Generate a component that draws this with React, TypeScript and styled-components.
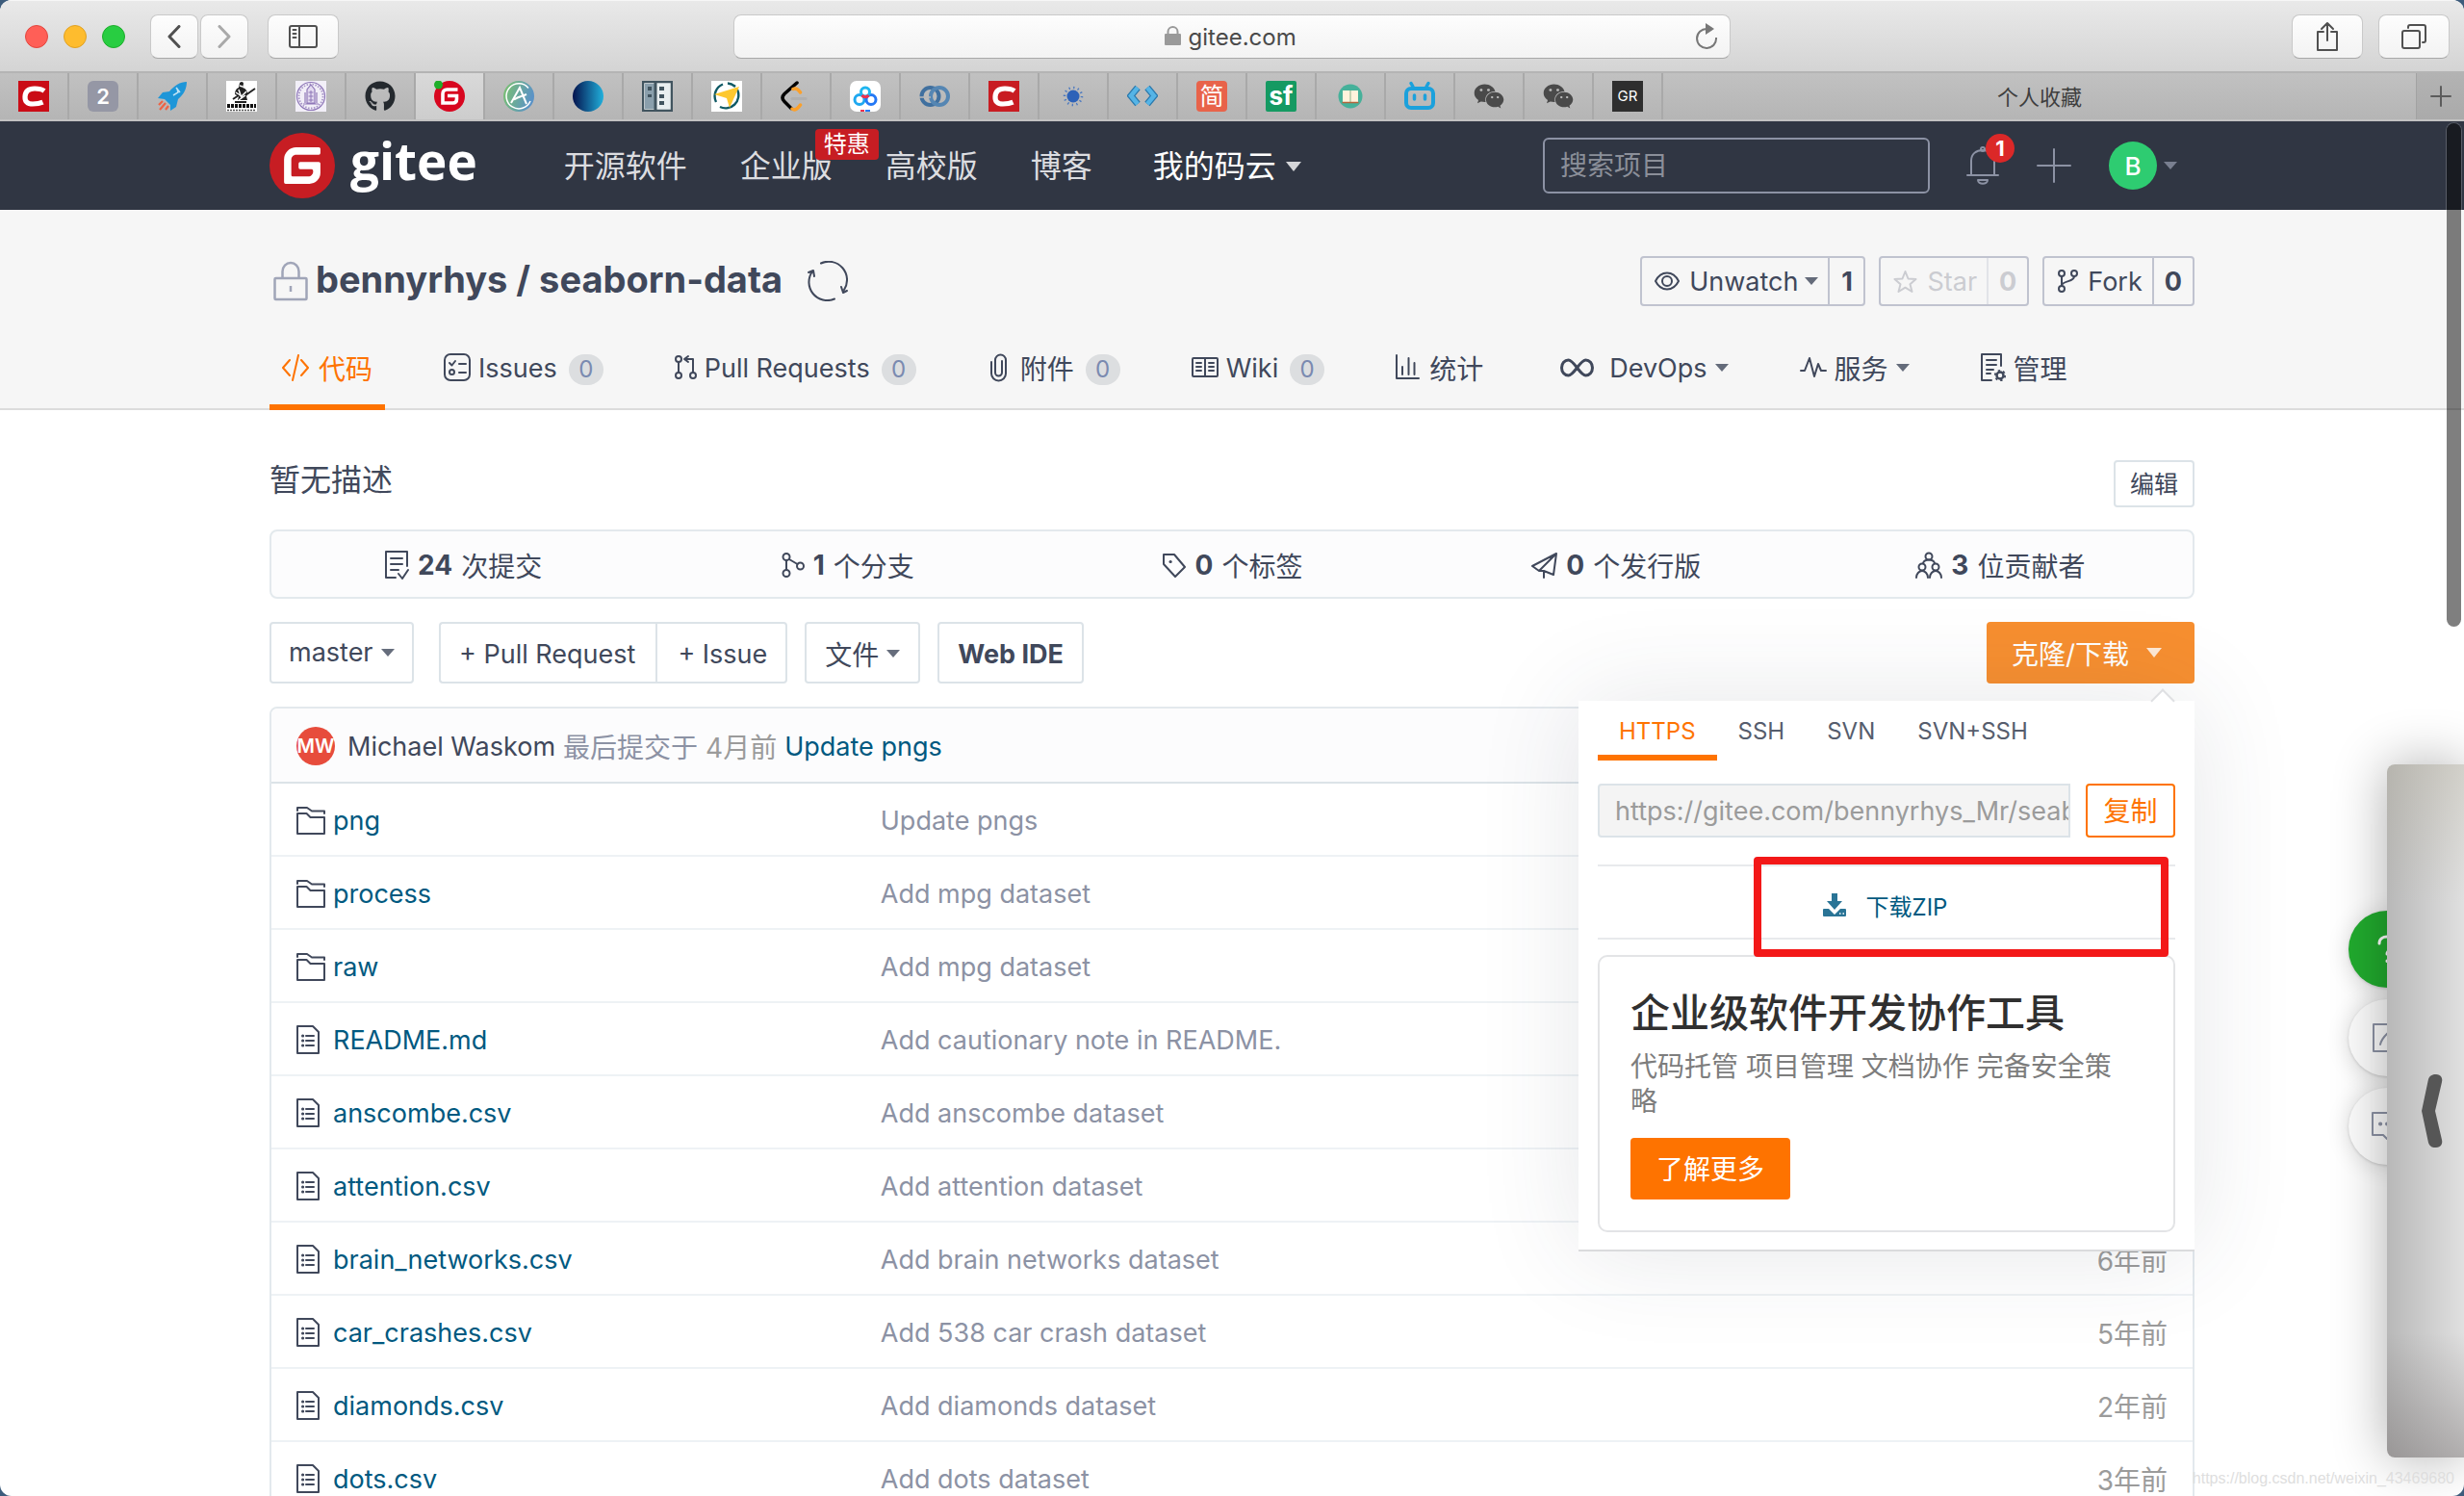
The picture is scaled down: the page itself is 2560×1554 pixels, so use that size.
import React from 'react';
import styled, { createGlobalStyle, css } from 'styled-components';
import { FaGithub, FaWeixin } from 'react-icons/fa';

const ink = '#40485b';
const muted = '#8c92a4';
const link = '#005980';
const orange = '#fe7300';
const line = '#dce3e8';
const sans = `Inter, "Noto Sans CJK SC", sans-serif`;

const Global = createGlobalStyle`
  *, *::before, *::after { box-sizing: border-box; }
  body { margin: 0; background: #3d5c7c; font-family: ${sans}; color: ${ink}; }
  button, input, select { font-family: inherit; color: inherit; margin: 0; }
  button { cursor: pointer; }
  a { color: inherit; text-decoration: none; }
  svg { display: block; flex: none; }
`;

/* ---------- window chrome ---------- */
const Window = styled.div`
  position: relative;
  display: flex;
  flex-direction: column;
  height: 100vh;
  overflow: hidden;
  border-radius: 12px;
  background: #fff;
`;
const TitleBar = styled.header`
  display: flex;
  align-items: center;
  height: 76px;
  padding: 0 15px;
  background: linear-gradient(#e9e9e9, #d4d4d4);
  border-top: 1px solid #f6f6f6;
  border-bottom: 2px solid #b4b4b4;
  flex: none;
`;
const BarSide = styled.div<{ $end?: boolean }>`
  flex: 1;
  display: flex;
  align-items: center;
  justify-content: ${p => (p.$end ? 'flex-end' : 'flex-start')};
  gap: ${p => (p.$end ? '16px' : '20px')};
`;
const Lights = styled.div`
  display: flex;
  gap: 16px;
  margin: 0 6px 0 11px;
`;
const Light = styled.button<{ $c: string; $b: string }>`
  width: 24px;
  height: 24px;
  padding: 0;
  border-radius: 50%;
  background: ${p => p.$c};
  border: 1px solid ${p => p.$b};
`;
const Pair = styled.div`
  display: flex;
  gap: 2px;
`;
const ChromeButton = styled.button<{ $w?: number; $dim?: boolean }>`
  display: flex;
  align-items: center;
  justify-content: center;
  width: ${p => p.$w ?? 74}px;
  height: 46px;
  padding: 0;
  color: ${p => (p.$dim ? '#a9a9a9' : '#505050')};
  background: linear-gradient(#fdfdfd, #f3f3f3);
  border: 1px solid #c9c9c9;
  border-bottom-color: #a8a8a8;
  border-radius: 8px;
`;
const Address = styled.div`
  flex: 0 1 1036px;
  display: flex;
  align-items: center;
  justify-content: center;
  height: 46px;
  padding: 0 12px;
  background: linear-gradient(#fdfdfd, #f3f3f3);
  border: 1px solid #c9c9c9;
  border-bottom-color: #a8a8a8;
  border-radius: 8px;
  color: #8e8e8e;
`;
const AddressSide = styled.span`
  flex: 1;
  display: flex;
  justify-content: flex-end;
`;
const AddressCore = styled.label`
  display: flex;
  align-items: center;
  gap: 8px;
`;
const AddressInput = styled.input`
  width: 116px;
  padding: 2px 0 0;
  border: 0;
  background: none;
  font-size: 24px;
  line-height: 32px;
  color: #4a4a4a;
  outline: none;
`;
const TabBar = styled.nav`
  display: flex;
  height: 50px;
  flex: none;
  background: linear-gradient(#c1c1c1, #b5b5b5);
  border-bottom: 2px solid #c2c2c2;
`;
const PinnedTab = styled.a<{ $on?: boolean }>`
  display: flex;
  align-items: center;
  justify-content: center;
  flex: 0 0 72px;
  border-right: 2px solid #a9a9a9;
  background: ${p => (p.$on ? 'linear-gradient(#d9d9d9, #cdcdcd)' : 'none')};
`;
const WideTab = styled.a`
  display: flex;
  align-items: center;
  justify-content: center;
  flex: 1;
  padding-bottom: 2px;
  font-size: 22px;
  color: #3e3e3e;
  border-right: 1px solid #a2a2a2;
`;
const NewTab = styled.button`
  display: flex;
  align-items: center;
  justify-content: center;
  width: 49px;
  padding: 0;
  border: 0;
  color: #5c5c5c;
  background: linear-gradient(#b3b3b3, #aaaaaa);
`;
const LetterIcon = styled.span<{ $bg: string; $r?: number; $s: number; $w?: number }>`
  display: flex;
  align-items: center;
  justify-content: center;
  width: 32px;
  height: 32px;
  border-radius: ${p => p.$r ?? 0}px;
  background: ${p => p.$bg};
  color: #fff;
  font-size: ${p => p.$s}px;
  font-weight: ${p => p.$w ?? 400};
  line-height: 32px;
`;

/* ---------- site header ---------- */
const SiteHeader = styled.header`
  height: 92px;
  flex: none;
  background: #303643;
`;
const Container = styled.div`
  width: 100%;
  max-width: 2000px;
  margin: 0 auto;
`;
const HeaderRow = styled(Container)`
  display: flex;
  align-items: center;
  height: 100%;
  padding-right: 18px;
`;
const Logo = styled.a`
  display: flex;
  align-items: center;
  gap: 16px;
  color: #fff;
`;
const LogoText = styled.span`
  font-family: "Open Sans", sans-serif;
  font-weight: 700;
  font-size: 53px;
  line-height: 68px;
  padding-bottom: 10px;
`;
const SiteNav = styled.nav`
  display: flex;
  gap: 55px;
  margin-left: 90px;
  padding-top: 2px;
`;
const SiteLink = styled.a<{ $on?: boolean }>`
  position: relative;
  display: flex;
  align-items: center;
  gap: 10px;
  font-size: 32px;
  line-height: 48px;
  color: ${p => (p.$on ? '#fff' : '#dcdde0')};
  ${p => p.$on && css`padding-left: 8px;`}
`;
const Promo = styled.span`
  position: absolute;
  left: 78px;
  top: -15px;
  padding: 0 9px;
  border-radius: 4px;
  background: #c71d23;
  color: #fff;
  font-size: 24px;
  line-height: 32px;
  white-space: nowrap;
`;
const Search = styled.input`
  width: 402px;
  height: 58px;
  margin-left: auto;
  padding: 0 16px;
  border: 2px solid ${muted};
  border-radius: 6px;
  background: transparent;
  color: #fff;
  font-size: 28px;
  &::placeholder { color: #8b8f99; opacity: 1; }
`;
const Tools = styled.div`
  display: flex;
  align-items: center;
  margin-left: 38px;
  gap: 39px;
  color: ${muted};
`;
const ToolButton = styled.button`
  position: relative;
  display: flex;
  align-items: center;
  gap: 7px;
  padding: 0;
  border: 0;
  background: none;
`;
const Notice = styled.span`
  position: absolute;
  left: 20px;
  top: -13px;
  width: 30px;
  height: 30px;
  border-radius: 50%;
  background: #db2828;
  color: #fff;
  font-size: 22px;
  font-weight: 700;
  line-height: 30px;
  text-align: center;
`;
const Avatar = styled.span<{ $size: number; $bg: string }>`
  display: flex;
  align-items: center;
  justify-content: center;
  flex: none;
  width: ${p => p.$size}px;
  height: ${p => p.$size}px;
  border-radius: 50%;
  background: ${p => p.$bg};
  color: #fff;
  font-size: ${p => (p.$size > 40 ? 26 : 20)}px;
  font-weight: ${p => (p.$size > 40 ? 500 : 600)};
`;
const Caret = styled.span<{ $big?: boolean }>`
  flex: none;
  width: 0;
  height: 0;
  border-style: solid;
  border-color: currentColor transparent transparent;
  border-width: ${p => (p.$big ? '10px 8px 0' : '8px 7px 0')};
  opacity: 0.8;
`;

/* ---------- repository header ---------- */
const RepoHead = styled.section`
  flex: none;
  padding-top: 48px;
  background: #f6f6f6;
  border-bottom: 2px solid #dcdcdc;
`;
const RepoTop = styled(Container)`
  display: flex;
  align-items: center;
  height: 52px;
  padding-left: 4px;
`;
const RepoName = styled.h1`
  margin: 0 26px 0 8px;
  padding-bottom: 4px;
  font-size: 38px;
  line-height: 48px;
  font-weight: 700;
`;
const Actions = styled.div`
  display: flex;
  gap: 14px;
  margin-left: auto;
`;
const Split = styled.div<{ $off?: boolean }>`
  display: flex;
  height: 52px;
  border: 2px solid #c0c3cf;
  border-radius: 4px;
  color: ${p => (p.$off ? '#cbccd1' : ink)};
`;
const SplitMain = styled.button`
  display: flex;
  align-items: center;
  padding: 0 10px 0 13px;
  border: 0;
  background: none;
  font-size: 27px;
  gap: 10px;
  ${Caret} { margin-left: -3px; }
`;
const SplitCount = styled.a<{ $off?: boolean }>`
  display: flex;
  align-items: center;
  justify-content: center;
  min-width: 37px;
  padding: 0 11px;
  border-left: 2px solid ${p => (p.$off ? '#e2e3e8' : '#c0c3cf')};
  font-size: 27px;
  font-weight: 700;
`;
const RepoTabs = styled.nav`
  display: flex;
  gap: 48px;
  margin: 26px 0 -2px;
`;
const RepoTab = styled.a<{ $on?: boolean; $gap?: number; $lead?: number }>`
  display: flex;
  align-items: center;
  gap: ${p => p.$gap ?? 8}px;
  height: 82px;
  padding: 0 13px 0 ${p => p.$lead ?? 13}px;
  border-bottom: 6px solid ${p => (p.$on ? orange : 'transparent')};
  color: ${p => (p.$on ? orange : ink)};
  white-space: nowrap;
`;
const Label = styled.span<{ $cjk?: boolean }>`
  font-size: ${p => (p.$cjk ? 28 : 27)}px;
`;
const TabLabel = styled(Label)`
  display: flex;
  align-items: center;
  gap: 8px;
`;
const Badge = styled.span`
  min-width: 36px;
  height: 32px;
  margin: 3px 0 0 4px;
  border-radius: 16px;
  background: #dcdee0;
  color: #7a8ab0;
  font-size: 24px;
  line-height: 32px;
  text-align: center;
`;

/* ---------- main column ---------- */
const Main = styled.main`
  flex: 1;
  min-height: 0;
  padding-top: 52px;
`;
const DescRow = styled.div`
  display: flex;
  align-items: center;
  justify-content: space-between;
`;
const Desc = styled.p`
  margin: 0;
  font-size: 32px;
  line-height: 40px;
  padding-bottom: 8px;
`;
const boxed = css`
  border: 2px solid ${line};
  border-radius: 4px;
  background: #fff;
`;
const EditButton = styled.button`
  ${boxed}
  width: 84px;
  height: 49px;
  padding: 0 0 3px;
  font-size: 25px;
`;
const Stats = styled.ul`
  display: grid;
  grid-template-columns: repeat(5, 1fr);
  height: 72px;
  margin: 23px 0 0;
  padding: 2px 0 0;
  list-style: none;
  border: 2px solid #e3e9ed;
  border-radius: 8px;
  background: #fcfcfd;
`;
const Stat = styled.li`
  display: flex;
  align-items: center;
  justify-content: center;
  gap: 9px;
  b { font-size: 28px; }
`;
const Toolbar = styled.div`
  display: flex;
  align-items: center;
  margin-top: 24px;
  gap: 18px;
`;
const BranchPick = styled.label`
  ${boxed}
  display: flex;
  align-items: center;
  width: 150px;
  height: 64px;
  margin-right: 8px;
  padding: 0 18px;
  gap: 8px;
`;
const BranchSelect = styled.select`
  flex: 1;
  min-width: 0;
  padding: 0;
  border: 0;
  appearance: none;
  background: none;
  font-size: 27px;
  line-height: 40px;
`;
const ToolBtn = styled.button<{ $cjk?: boolean; $strong?: boolean }>`
  ${boxed}
  display: flex;
  align-items: center;
  height: 64px;
  padding: 2px 19px 0;
  gap: 8px;
  font-size: ${p => (p.$cjk ? 28 : 27)}px;
  font-weight: ${p => (p.$strong ? 700 : 400)};
`;
const BtnGroup = styled.div`
  display: flex;
  ${ToolBtn}:first-child { border-radius: 4px 0 0 4px; border-right: 0; padding-right: 21px; }
  ${ToolBtn}:last-child { border-radius: 0 4px 4px 0; padding-left: 21px; }
`;
const CloneWrap = styled.div`
  position: relative;
  margin-left: auto;
`;
const CloneButton = styled.button`
  display: flex;
  align-items: center;
  justify-content: center;
  gap: 18px;
  width: 216px;
  height: 64px;
  padding: 0 8px 0 0;
  border: 0;
  border-radius: 4px;
  background: #f78f30;
  color: #fff;
  font-size: 28px;
`;

/* ---------- clone popup ---------- */
const Popup = styled.div`
  position: absolute;
  z-index: 3;
  top: 82px;
  right: 0;
  width: 640px;
  padding: 0 20px 18px;
  background: #fff;
  border-bottom: 2px solid #dadbdd;
  box-shadow: 0 0 100px rgba(50, 54, 70, 0.12);
  &::before {
    content: '';
    position: absolute;
    top: -9px;
    right: 24px;
    width: 18px;
    height: 18px;
    background: #fff;
    border: solid #dfe0e3;
    border-width: 2px 0 0 2px;
    transform: rotate(45deg);
  }
`;
const ProtoTabs = styled.div`
  position: relative;
  display: flex;
  height: 62px;
`;
const Proto = styled.button<{ $on?: boolean }>`
  padding: 6px 22px 0;
  border: 0;
  border-bottom: 6px solid ${p => (p.$on ? orange : 'transparent')};
  background: none;
  color: ${p => (p.$on ? orange : '#565d6d')};
  font-size: 24px;
`;
const UrlRow = styled.div`
  display: flex;
  gap: 16px;
  margin-top: 24px;
`;
const UrlInput = styled.input`
  flex: 1;
  min-width: 0;
  height: 56px;
  padding: 0 0 0 16px;
  border: 2px solid ${line};
  border-radius: 4px 0 0 4px;
  background: #f4f4f4;
  color: #9b9b9b;
  font-size: 27px;
`;
const CopyButton = styled.button`
  width: 93px;
  height: 56px;
  padding: 0 0 2px;
  border: 2px solid ${orange};
  border-radius: 4px;
  background: #fff;
  color: ${orange};
  font-size: 28px;
`;
const ZipRow = styled.div`
  position: relative;
  display: flex;
  align-items: center;
  justify-content: center;
  height: 78px;
  margin-top: 28px;
  padding-top: 6px;
  border: solid #e8eaec;
  border-width: 2px 0;
`;
const ZipLink = styled.a`
  display: flex;
  align-items: center;
  gap: 20px;
  padding-right: 4px;
  color: ${link};
  font-size: 24px;
`;
const Highlight = styled.div`
  position: absolute;
  z-index: 1;
  top: -10px;
  right: 7px;
  width: 431px;
  height: 104px;
  border: 8px solid #f31818;
  border-radius: 4px;
  pointer-events: none;
`;
const Ad = styled.section`
  margin-top: 16px;
  padding: 30px 40px 32px 32px;
  border: 2px solid #e3e4e6;
  border-radius: 10px;
`;
const AdTitle = styled.h2`
  margin: 0;
  font-size: 41px;
  line-height: 56px;
  font-weight: 500;
  color: #303030;
  white-space: nowrap;
`;
const AdText = styled.p`
  margin: 10px 0 20px;
  font-size: 28px;
  line-height: 36px;
  color: #7d7d7d;
`;
const AdButton = styled.button`
  width: 166px;
  height: 64px;
  padding: 0 0 2px;
  border: 0;
  border-radius: 4px;
  background: ${orange};
  color: #fff;
  font-size: 28px;
`;

/* ---------- file table ---------- */
const TableBox = styled.div`
  margin-top: 24px;
  border: 2px solid #e3e9ed;
  border-radius: 8px;
  overflow: hidden;
`;
const Table = styled.table`
  width: 100%;
  table-layout: fixed;
  border-collapse: separate;
  border-spacing: 0;
`;
const HeadCell = styled.th`
  height: 78px;
  padding: 2px 26px 0;
  text-align: left;
  font-weight: 400;
  background: #fcfcfd;
  border-bottom: 2px solid ${line};
`;
const HeadLine = styled.div`
  display: flex;
  align-items: center;
  gap: 8px;
  ${Avatar} { margin-right: 5px; }
`;
const Cell = styled.td<{ $right?: boolean }>`
  height: 76px;
  padding: 2px 26px 0;
  border-bottom: 2px solid #eef2f5;
  text-align: ${p => (p.$right ? 'right' : 'left')};
  font-size: ${p => (p.$right ? 28 : 27)}px;
  color: ${p => (p.$right ? '#9b9b9b' : muted)};
  white-space: nowrap;
`;
const FileName = styled.a`
  display: flex;
  align-items: center;
  color: ${link};
`;
const IconSlot = styled.span`
  width: 38px;
  color: ${ink};
`;
const Tint = styled(Label)<{ $c: string }>`
  color: ${p => p.$c};
`;

/* ---------- overlays at the window edge ---------- */
const ScrollThumb = styled.div`
  position: absolute;
  z-index: 5;
  top: 128px;
  right: 3px;
  width: 15px;
  height: 523px;
  border-radius: 8px;
  background: rgba(0, 0, 0, 0.5);
  box-shadow: 0 0 0 1px rgba(255, 255, 255, 0.2);
`;
const HelpStack = styled.div`
  position: absolute;
  z-index: 4;
  top: 946px;
  right: 40px;
  display: flex;
  flex-direction: column;
  gap: 12px;
`;
const HelpButton = styled.button<{ $green?: boolean }>`
  display: flex;
  align-items: center;
  justify-content: center;
  width: 80px;
  height: 80px;
  padding: 0;
  border: 0;
  border-radius: 50%;
  background: ${p => (p.$green ? '#21ab2e' : '#fcfcfc')};
  color: ${p => (p.$green ? '#fff' : muted)};
  box-shadow: 0 2px 24px rgba(0, 0, 0, 0.14), 0 1px 3px rgba(0, 0, 0, 0.15);
`;
const Drawer = styled.button`
  position: absolute;
  z-index: 4;
  top: 794px;
  right: 0;
  width: 80px;
  height: 720px;
  padding: 0 0 0 36px;
  border: 0;
  border-radius: 8px 0 0 8px;
  color: #565656;
  background:
    linear-gradient(rgba(178, 172, 150, 0.3), transparent 20%, transparent 82%, rgba(110, 104, 104, 0.42)),
    linear-gradient(90deg, #b8b8b8, #e0e0e0);
  box-shadow: 0 0 56px rgba(0, 0, 0, 0.32);
`;
const Watermark = styled.span`
  position: absolute;
  z-index: 5;
  right: 10px;
  bottom: 8px;
  font-family: "Liberation Sans", sans-serif;
  font-size: 16px;
  line-height: 20px;
  color: #dedede;
`;

/* ---------- icons ---------- */
type IconProps = { w: number; h: number; sw?: number; children: React.ReactNode; vb?: string };
const Icon = ({ w, h, sw = 2, children, vb }: IconProps) => (
  <svg width={w} height={h} viewBox={vb ?? `0 0 ${w} ${h}`} fill="none" stroke="currentColor" strokeWidth={sw} strokeLinecap="round" strokeLinejoin="round" aria-hidden="true">{children}</svg>
);
const GiteeMark = ({ size, color }: { size: number; color: string }) => (
  <svg width={size} height={size} viewBox="0 0 24 24" aria-hidden="true">
    <circle cx="12" cy="12" r="11.5" fill="#fff" />
    <path fill={color} d="M11.984 0A12 12 0 0 0 0 12a12 12 0 0 0 12 12 12 12 0 0 0 12-12A12 12 0 0 0 12 0a12 12 0 0 0-.016 0zm6.09 5.333c.328 0 .593.266.592.593v1.482a.594.594 0 0 1-.593.592H9.777c-.982 0-1.778.796-1.778 1.778v5.63c0 .327.266.592.593.592h5.63c.982 0 1.778-.796 1.778-1.778v-.296a.593.593 0 0 0-.592-.593h-4.15a.592.592 0 0 1-.592-.592v-1.482a.593.593 0 0 1 .593-.592h6.815c.327 0 .593.265.593.592v3.408a4 4 0 0 1-4 4H5.926a.593.593 0 0 1-.593-.593V9.778a4.444 4.444 0 0 1 4.445-4.444h8.296Z" />
  </svg>
);
const F = ({ children }: { children: React.ReactNode }) => (
  <svg width="32" height="32" viewBox="0 0 32 32" fill="none" aria-hidden="true">{children}</svg>
);
const CMark = ({ bg }: { bg: string }) => (
  <F><rect width="32" height="32" fill={bg} /><path d="M27 10.500C24 8.300 21 8 17 8C10 8 7.200 11.500 7 16.500C6.800 21.500 9.500 24 15 24C19 24 22.500 23.500 25.500 22.200" stroke="#fff" strokeWidth="5.200" /></F>
);

const pinned: { name: string; icon: React.ReactNode; on?: boolean }[] = [
  { name: 'CSDN', icon: <CMark bg="#ca0c16" /> },
  { name: '2', icon: <LetterIcon $bg="#9597a5" $r={6} $s={22} $w={600}>2</LetterIcon> },
  { name: 'Rocket', icon: <F><path d="M31 1C24 1 18 5 13 11L6 12L1 18L8 19L14 25L14 31L20 27L22 19C28 14 31 8 31 1Z" fill="#1e96d8" /><path d="M20 7l4 5M17 15l5-3-1-4" stroke="#bfe3f5" strokeWidth="1.500" /><path d="M6 21L2 25M9 23L3 30M12 26L9 30" stroke="#ee6244" strokeWidth="2.200" /></F> },
  { name: 'Sketch', icon: <F><rect width="32" height="32" fill="#fff" /><path d="M14 2c2-2 4-1 4 1l-1 4c3 1 5 3 5 6l-1 3 1 4H12l1-4-4-2c0-3 1-6 4-7z" fill="#222" /><path d="M10 12l6 4 5-5M13 20l7-5M14 5l3 1M13 9l3 9" stroke="#fff" strokeWidth="1.500" /><path d="M20 15l10-7M7 19l6-4M9 22h12" stroke="#222" strokeWidth="2" /><path d="M1 26h30" stroke="#111" strokeWidth="4" strokeDasharray="3 1" /><path d="M1 30.500h30" stroke="#555" strokeWidth="1.500" strokeDasharray="2 1" /></F> },
  { name: 'University', icon: <F><rect width="32" height="32" fill="#f2eff8" /><circle cx="16" cy="16" r="14.500" stroke="#8f78b8" strokeWidth="1.200" /><circle cx="16" cy="16" r="12.500" stroke="#a896c8" strokeWidth="1.800" strokeDasharray="1.500 1.500" /><path d="M16 4l4 5v14h-8V9zM10 12v11M22 12v11M8 24h16" stroke="#8f78b8" strokeWidth="1.200" fill="#e3daf0" /><path d="M13.500 12h5M13.500 16h5M13.500 20h5M16 10v12" stroke="#8f78b8" /></F> },
  { name: 'GitHub', icon: <FaGithub size={32} color="#24292e" /> },
  { name: 'Gitee', on: true, icon: <F><circle cx="16" cy="16" r="16" fill="#d8061f" /><path d="M24.500 9H13.500C10.500 9 9 11 9 13.500V23H19.500C22 23 23.500 21.500 23.500 19V15.500H14" stroke="#fff" strokeWidth="3.600" /><circle cx="4.500" cy="4" r="4.500" fill="#1fae2a" /></F> },
  { name: 'A', icon: <F><defs><linearGradient id="ga" x1="0" x2="1" y1="0" y2="0.300"><stop stopColor="#7cc46a" /><stop offset="1" stopColor="#5b93c6" /></linearGradient></defs><circle cx="16" cy="16" r="16" fill="url(#ga)" /><path d="M26 7.500A13 13 0 1 0 28 21" stroke="#fff" strokeWidth="1.500" /><path d="M8 23L17 7L24 24M11 19.500C16 16 20 16 24 14" stroke="#fff" strokeWidth="2" /></F> },
  { name: 'Gradient', icon: <F><defs><linearGradient id="gb"><stop stopColor="#04124d" /><stop offset="1" stopColor="#21b0dc" /></linearGradient></defs><circle cx="16" cy="16" r="16" fill="url(#gb)" /></F> },
  { name: 'Building', icon: <F><rect x="1" y="1" width="30" height="30" fill="#e8eef0" stroke="#41545f" strokeWidth="2.500" /><rect x="3" y="3" width="10" height="26" fill="#8a9fac" /><path d="M14 1v30" stroke="#41545f" strokeWidth="3" /><path d="M6 6h4v4H6zM6 14h4v3H6zM18 6h5v4h-5zM18 14h5v4h-5zM18 21h5v4h-5z" fill="#41545f" /></F> },
  { name: 'Compass', icon: <F><rect width="32" height="32" fill="#fff" /><path d="M12 3.500A13.500 13.500 0 0 0 5 22M9 27A13.500 13.500 0 0 0 27 9M17 2.500a13.500 13.500 0 0 1 8 3.500" stroke="#0e5964" strokeWidth="2.400" /><path d="M29 6L19 28L16 18L3 14Z" fill="#fdc82f" /></F> },
  { name: 'LeetCode', icon: <F><path d="M17 2L4 13.500C1.500 16 1.500 19 4 21.500L11 28.500" stroke="#000" strokeWidth="3.500" strokeLinecap="round" /><path d="M13 8.500C16 7 18.500 9 20.500 12M12 29C15 31.500 18 28.500 20.500 25" stroke="#fba02a" strokeWidth="3.500" strokeLinecap="round" /><path d="M12 18.500h14" stroke="#b0b0b0" strokeWidth="3" strokeLinecap="round" /></F> },
  { name: 'Netdisk', icon: <F><rect width="32" height="32" rx="7" fill="#fff" /><circle cx="10" cy="19.500" r="5" stroke="#1fa8f0" strokeWidth="3" /><circle cx="22" cy="19.500" r="5" stroke="#2478f5" strokeWidth="3" /><circle cx="16" cy="11.500" r="4.500" stroke="#1fb6f0" strokeWidth="3" /><path d="M12.500 15a4.500 4.500 0 0 0 7 0" stroke="#f0304e" strokeWidth="3" /><path d="M11 31h4" stroke="#ee3050" strokeWidth="2" /><path d="M16 31h5" stroke="#2478f5" strokeWidth="2" /></F> },
  { name: 'Rings', icon: <F><circle cx="11.500" cy="16" r="9" stroke="#40709f" strokeWidth="4" /><circle cx="21" cy="16" r="9" stroke="#5586b3" strokeWidth="4" /><path d="M0 17h12" stroke="#b9b9b9" strokeWidth="1.500" /></F> },
  { name: 'C', icon: <CMark bg="#c81c22" /> },
  { name: 'Sun', icon: <F><circle cx="16" cy="16" r="6.500" fill="#2d62b8" /><circle cx="16" cy="16" r="9" stroke="#4a78c0" strokeWidth="2.500" strokeDasharray="1.300 3.400" /></F> },
  { name: 'Code', icon: <F><path d="M11 7L4 15.500L11 24M21 7L28 15.500L21 24" stroke="#2a78ac" strokeWidth="7" /><path d="M11 7L4 15.500L11 24M21 7L28 15.500L21 24" stroke="#55b4e6" strokeWidth="4.500" /></F> },
  { name: 'Jianshu', icon: <LetterIcon $bg="#e8634a" $r={4} $s={25}>简</LetterIcon> },
  { name: 'SegmentFault', icon: <LetterIcon $bg="#159a62" $r={2} $s={26} $w={700}>sf</LetterIcon> },
  { name: 'Book', icon: <F><circle cx="16" cy="16" r="12.500" fill="#46b19a" /><path d="M8 10h7.500v12H8zM16.500 10H24v12h-7.500z" fill="#fff3dc" /><path d="M15.500 10h1v12h-1z" fill="#e8d3ac" /><path d="M7.500 22.500h17" stroke="#b0653c" strokeWidth="1.500" /></F> },
  { name: 'Bilibili', icon: <F><rect x="2" y="8" width="28" height="20" rx="5" stroke="#1ba1dc" strokeWidth="4" /><path d="M9 6L7 2.500M23 6l2-3.500M10.500 15v4M21.500 15v4" stroke="#1ba1dc" strokeWidth="3.500" strokeLinecap="round" /></F> },
  { name: 'WeChat', icon: <FaWeixin size={32} color="#4a4a4a" /> },
  { name: 'WeChat', icon: <FaWeixin size={32} color="#4a4a4a" /> },
  { name: 'GR', icon: <LetterIcon $bg="#2e2e2e" $s={15}>GR</LetterIcon> },
];

const FolderIcon = () => (
  <Icon w={30} h={30}><path d="M1 5V2H11L16 5.500H29V8" /><path d="M1 8H10.500L14.500 12H29V29H1Z" /></Icon>
);
const DocIcon = () => (
  <Icon w={24} h={30}><path d="M1 1H17L23 7V29H1Z" /><path d="M10 11H18M10 16H18M10 21H18" /><path d="M6.500 11h.2M6.500 16h.2M6.500 21h.2" strokeWidth="3" /></Icon>
);

const tabs: { label: string; cjk?: boolean; count?: number; caret?: boolean; gap?: number; lead?: number; on?: boolean; icon: React.ReactNode }[] = [
  { label: '代码', cjk: true, on: true, gap: 10, icon: <Icon w={28} h={28}><path d="M8 6L1 14L8 22M20 6L27 14L20 22M17 1L11 27" /></Icon> },
  { label: 'Issues', count: 0, icon: <Icon w={28} h={30}><rect x="1" y="1" width="26" height="27" rx="6" /><path d="M6 10l2.500 2.500L12 8M16 11h7M16 20h7" /><circle cx="8.500" cy="19.500" r="2.500" /></Icon> },
  { label: 'Pull Requests', count: 0, icon: <Icon w={23} h={28}><circle cx="4" cy="5" r="3" /><circle cx="4" cy="22" r="3" /><circle cx="19" cy="22" r="3" /><path d="M4 8v11M19 19V5H11M14 2l-4 3 4 3" /></Icon> },
  { label: '附件', cjk: true, count: 0, gap: 14, lead: 16, icon: <Icon w={17} h={30}><path d="M1 9v12a7.500 7.500 0 0 0 15 0V7a5.500 5.500 0 0 0-11 0v13a3.500 3.500 0 0 0 7 0V8" /></Icon> },
  { label: 'Wiki', count: 0, icon: <Icon w={28} h={24}><rect x="1" y="2" width="26" height="19" rx="1" /><path d="M14 2v19M5 7h5M5 11h5M5 15h5M18 7h5M18 11h5M18 15h5" /></Icon> },
  { label: '统计', cjk: true, gap: 10, icon: <Icon w={25} h={28}><path d="M1 1V25H24M7 13v8M13.500 4v17M19.500 9v12" /></Icon> },
  { label: 'DevOps', caret: true, gap: 16, lead: 19, icon: <Icon w={35} h={20} sw={3}><path d="M17.500 10C13 4 11 2 8.500 2a7 8 0 0 0 0 16C11 18 13 16 17.500 10C22 4 24 2 26.500 2a7 8 0 0 1 0 16C24 18 22 16 17.500 10Z" /></Icon> },
  { label: '服务', cjk: true, caret: true, icon: <Icon w={28} h={24}><path d="M1 15H5L10 2L15 21L19 8L22 15H27" /></Icon> },
  { label: '管理', cjk: true, icon: <Icon w={26} h={30}><path d="M21 13V1H1V28H11M6 7h10M6 12h10M6 17h7M6 21h4" /><circle cx="20" cy="23" r="3.500" strokeWidth="2.500" /><circle cx="20" cy="23" r="5.200" strokeWidth="1.800" strokeDasharray="2.400 3" strokeLinecap="butt" /></Icon> },
];

const stats = [
  { n: 24, t: '次提交', icon: <Icon w={25} h={30}><path d="M23 16V1H1V28H11M6 8h12M6 14h12M6 20h8M14 24l4 5 6-9" /></Icon> },
  { n: 1, t: '个分支', icon: <Icon w={24} h={26}><circle cx="5" cy="4.500" r="3.500" /><circle cx="5" cy="21.500" r="3.500" /><circle cx="19.500" cy="14" r="3.500" /><path d="M5 8v10M8 7l8.500 5" /></Icon> },
  { n: 0, t: '个标签', icon: <Icon w={26} h={26}><path d="M2 2H13L24 15L14 25L2 12Z" /><path d="M9 9.500h.2" strokeWidth="3" /></Icon> },
  { n: 0, t: '个发行版', icon: <Icon w={27} h={28}><path d="M26 2L1 15L8 20L26 2L23 24L13 20V27M8 20L13 20" /></Icon> },
  { n: 3, t: '位贡献者', icon: <Icon w={28} h={28}><circle cx="14" cy="5" r="3.500" /><circle cx="7" cy="16" r="3.500" /><circle cx="21" cy="16" r="3.500" /><path d="M1 27C1 23 4 20 7 20S13 23 13 27M15 27C15 23 18 20 21 20S27 23 27 27M8 12C9 9 12 8.500 14 8.500S19 9 20 12" /></Icon> },
];

const files: { name: string; msg: string; age?: string; dir?: boolean }[] = [
  { name: 'png', msg: 'Update pngs', dir: true },
  { name: 'process', msg: 'Add mpg dataset', dir: true },
  { name: 'raw', msg: 'Add mpg dataset', dir: true },
  { name: 'README.md', msg: 'Add cautionary note in README.' },
  { name: 'anscombe.csv', msg: 'Add anscombe dataset' },
  { name: 'attention.csv', msg: 'Add attention dataset' },
  { name: 'brain_networks.csv', msg: 'Add brain networks dataset', age: '6年前' },
  { name: 'car_crashes.csv', msg: 'Add 538 car crash dataset', age: '5年前' },
  { name: 'diamonds.csv', msg: 'Add diamonds dataset', age: '2年前' },
  { name: 'dots.csv', msg: 'Add dots dataset', age: '3年前' },
];

const ClonePopup = () => (
  <Popup>
    <ProtoTabs>
      {['HTTPS', 'SSH', 'SVN', 'SVN+SSH'].map((p, i) => <Proto key={p} type="button" $on={i === 0}>{p}</Proto>)}
    </ProtoTabs>
    <UrlRow>
      <UrlInput readOnly aria-label="HTTPS" value="https://gitee.com/bennyrhys_Mr/seaborn-data.git" />
      <CopyButton type="button">复制</CopyButton>
    </UrlRow>
    <ZipRow>
      <ZipLink href="#zip">
        <svg width="26" height="26" viewBox="0 0 26 26" fill="#2a7496" aria-hidden="true">
          <path d="M10 1h6v8h5l-8 9-8-9h5z" />
          <path d="M2 17h5l6 6 6-6h5a1 1 0 0 1 1 1v6a1 1 0 0 1-1 1H2a1 1 0 0 1-1-1v-6a1 1 0 0 1 1-1z" />
          <path d="M18 22h1.500M21.500 22H23" stroke="#fff" strokeWidth="1.500" />
        </svg>
        下载ZIP
      </ZipLink>
      <Highlight />
    </ZipRow>
    <Ad>
      <AdTitle>企业级软件开发协作工具</AdTitle>
      <AdText>代码托管 项目管理 文档协作 完备安全策略</AdText>
      <AdButton type="button">了解更多</AdButton>
    </Ad>
  </Popup>
);

export default function App() {
  return (
    <Window>
      <Global />
      <TitleBar>
        <BarSide>
          <Lights>
            <Light aria-label="Close" $c="#ff5f57" $b="#e2463f" />
            <Light aria-label="Minimize" $c="#febc2e" $b="#e0a123" />
            <Light aria-label="Zoom" $c="#28cd41" $b="#1dad2b" />
          </Lights>
          <Pair>
            <ChromeButton aria-label="Back" $w={50}><Icon w={14} h={24} sw={3}><path d="M12 1.500L2 12L12 22.500" /></Icon></ChromeButton>
            <ChromeButton aria-label="Forward" $w={50} $dim><Icon w={14} h={24} sw={3}><path d="M2 1.500L12 12L2 22.500" /></Icon></ChromeButton>
          </Pair>
          <ChromeButton aria-label="Sidebar"><Icon w={30} h={24} sw={2}><rect x="1" y="1" width="28" height="22" rx="2" /><path d="M11 1v22M4.500 5h3M4.500 9h3M4.500 13h3" /></Icon></ChromeButton>
        </BarSide>
        <Address>
          <AddressSide />
          <AddressCore>
            <svg width="17" height="21" viewBox="0 0 17 21" aria-hidden="true"><path d="M3.500 9V6a5 5 0 0 1 10 0v3" fill="none" stroke="#9a9a9a" strokeWidth="2" /><rect y="8" width="17" height="12" rx="1" fill="#9a9a9a" /></svg>
            <AddressInput aria-label="Address" defaultValue="gitee.com" />
          </AddressCore>
          <AddressSide>
            <svg width="24" height="28" viewBox="0 0 24 28" aria-hidden="true"><path d="M12.500 6A10 10 0 1 0 22 15" fill="none" stroke="#777" strokeWidth="2" /><path d="M11 0l9 6-9 6z" fill="#777" /></svg>
          </AddressSide>
        </Address>
        <BarSide $end>
          <ChromeButton aria-label="Share"><Icon w={24} h={32} sw={2}><path d="M8 11H2V30H22V11H16M12 20V2M6 8l6-6 6 6" /></Icon></ChromeButton>
          <ChromeButton aria-label="Tabs"><Icon w={26} h={26} sw={2}><rect x="1" y="7" width="18" height="18" rx="2" /><path d="M7 4V3a2 2 0 0 1 2-2H23a2 2 0 0 1 2 2V17a2 2 0 0 1-2 2H22" /></Icon></ChromeButton>
        </BarSide>
      </TitleBar>
      <TabBar>
        {pinned.map((t, i) => <PinnedTab key={i} href="#tab" aria-label={t.name} $on={t.on}>{t.icon}</PinnedTab>)}
        <WideTab href="#tab">个人收藏</WideTab>
        <NewTab aria-label="New tab"><Icon w={22} h={22}><path d="M11 1v20M1 11h20" /></Icon></NewTab>
      </TabBar>

      <SiteHeader>
        <HeaderRow>
          <Logo href="#home"><GiteeMark size={68} color="#c71d23" /><LogoText>gitee</LogoText></Logo>
          <SiteNav>
            <SiteLink href="#oss">开源软件</SiteLink>
            <SiteLink href="#ent">企业版<Promo>特惠</Promo></SiteLink>
            <SiteLink href="#edu">高校版</SiteLink>
            <SiteLink href="#blog">博客</SiteLink>
            <SiteLink href="#mine" $on>我的码云<Caret $big /></SiteLink>
          </SiteNav>
          <Search type="text" aria-label="搜索项目" placeholder="搜索项目" />
          <Tools>
            <ToolButton aria-label="Notifications">
              <Icon w={34} h={40} vb="0 0 34 40"><path d="M5 30V15C5 8 10 4 17 4S29 8 29 15V30M1 30H33M12 35c0 5 10 5 10 0z" /><circle cx="17" cy="3" r="2" /></Icon>
              <Notice>1</Notice>
            </ToolButton>
            <ToolButton aria-label="New"><Icon w={36} h={36}><path d="M18 1v34M1 18h34" /></Icon></ToolButton>
            <ToolButton aria-label="Account"><Avatar $size={50} $bg="#2ecc71">B</Avatar><Caret /></ToolButton>
          </Tools>
        </HeaderRow>
      </SiteHeader>

      <RepoHead>
        <RepoTop>
          <svg width="36" height="42" viewBox="0 0 36 42" fill="none" stroke="#a0a5b8" strokeWidth="2.500" aria-hidden="true"><path d="M9.500 18V11a8.500 9 0 0 1 17 0V18" /><rect x="1.500" y="18" width="33" height="22" rx="1" /><path d="M18 26v6" /></svg>
          <RepoName>bennyrhys / seaborn-data</RepoName>
          <Icon w={42} h={42}><path d="M14 2.500A19 19 0 0 1 38 30M28 39.500A19 19 0 0 1 5 11M1 12l5-2 1 6M41 31l-4 2-2-6" /></Icon>
          <Actions>
            <Split>
              <SplitMain><Icon w={26} h={20}><path d="M1 10C4 4 8 1.500 13 1.500S22 4 25 10C22 16 18 18.500 13 18.500S4 16 1 10Z" /><circle cx="13" cy="10" r="5" /></Icon>Unwatch<Caret /></SplitMain>
              <SplitCount href="#watchers">1</SplitCount>
            </Split>
            <Split $off>
              <SplitMain><Icon w={25} h={24}><path d="M12.500 2l3 7.500 8 .5-6 5.200 2 7.800-7-4.300-7 4.300 2-7.800-6-5.200 8-.5z" /></Icon>Star</SplitMain>
              <SplitCount href="#stars" $off>0</SplitCount>
            </Split>
            <Split>
              <SplitMain><Icon w={22} h={24}><circle cx="5" cy="4" r="3" /><circle cx="18" cy="4" r="3" /><circle cx="5" cy="20" r="3" /><path d="M5 7v10M18 7C18 13 8 11 5 16" /></Icon>Fork</SplitMain>
              <SplitCount href="#forks">0</SplitCount>
            </Split>
          </Actions>
        </RepoTop>
        <Container>
          <RepoTabs>
            {tabs.map(t => (
              <RepoTab key={t.label} href="#tab" $on={t.on} $gap={t.gap} $lead={t.lead}>
                {t.icon}
                <TabLabel $cjk={t.cjk}>{t.label}{t.count !== undefined && <Badge>{t.count}</Badge>}{t.caret && <Caret />}</TabLabel>
              </RepoTab>
            ))}
          </RepoTabs>
        </Container>
      </RepoHead>

      <Main>
        <Container>
          <DescRow><Desc>暂无描述</Desc><EditButton type="button">编辑</EditButton></DescRow>
          <Stats>
            {stats.map(s => <Stat key={s.t}>{s.icon}<b>{s.n}</b><Label $cjk>{s.t}</Label></Stat>)}
          </Stats>
          <Toolbar>
            <BranchPick>
              <BranchSelect aria-label="Branch" defaultValue="master"><option>master</option></BranchSelect>
              <Caret />
            </BranchPick>
            <BtnGroup><ToolBtn type="button">+ Pull Request</ToolBtn><ToolBtn type="button">+ Issue</ToolBtn></BtnGroup>
            <ToolBtn type="button" $cjk>文件<Caret /></ToolBtn>
            <ToolBtn type="button" $strong>Web IDE</ToolBtn>
            <CloneWrap>
              <CloneButton type="button">克隆/下载<Caret $big /></CloneButton>
              <ClonePopup />
            </CloneWrap>
          </Toolbar>
          <TableBox>
            <Table>
              <colgroup><col width="30.4%" /><col /><col width="16%" /></colgroup>
              <thead>
                <tr>
                  <HeadCell colSpan={3}>
                    <HeadLine>
                      <Avatar $size={40} $bg="#e74c3c">MW</Avatar>
                      <Label>Michael Waskom</Label>
                      <Tint $cjk $c={muted}>最后提交于</Tint>
                      <Tint $cjk $c="#9b9b9b">4月前</Tint>
                      <Tint $c={link}>Update pngs</Tint>
                    </HeadLine>
                  </HeadCell>
                </tr>
              </thead>
              <tbody>
                {files.map(f => (
                  <tr key={f.name}>
                    <Cell><FileName href="#file"><IconSlot>{f.dir ? <FolderIcon /> : <DocIcon />}</IconSlot>{f.name}</FileName></Cell>
                    <Cell>{f.msg}</Cell>
                    <Cell $right>{f.age}</Cell>
                  </tr>
                ))}
              </tbody>
            </Table>
          </TableBox>
        </Container>
      </Main>

      <ScrollThumb />
      <HelpStack>
        <HelpButton $green aria-label="Help"><Icon w={28} h={34} sw={3}><path d="M6 11C6 6 10 4 14 4s8 3 8 7c0 5-8 6-8 11M14 29v.5" /></Icon></HelpButton>
        <HelpButton aria-label="Feedback"><Icon w={30} h={30}><path d="M29 14V29H1V1H18M8 22C10 14 16 8 29 2" /></Icon></HelpButton>
        <HelpButton aria-label="Chat"><Icon w={32} h={30}><path d="M1 1H31V24H21L16 28L12 24H1Z" /><path d="M9 12.500h.2M16 12.500h.2M23 12.500h.2" strokeWidth="4" /></Icon></HelpButton>
      </HelpStack>
      <Drawer aria-label="Open panel">
        <svg width="22" height="76" viewBox="0 0 22 76" fill="currentColor" aria-hidden="true"><path d="M7 5C9 0 13 0 15 0C20 0 22 4 21 8L14 38L21 68C22 72 20 76 15 76C12 76 9 76 7 71L0 38Z" /></svg>
      </Drawer>
      <Watermark>https://blog.csdn.net/weixin_43469680</Watermark>
    </Window>
  );
}
